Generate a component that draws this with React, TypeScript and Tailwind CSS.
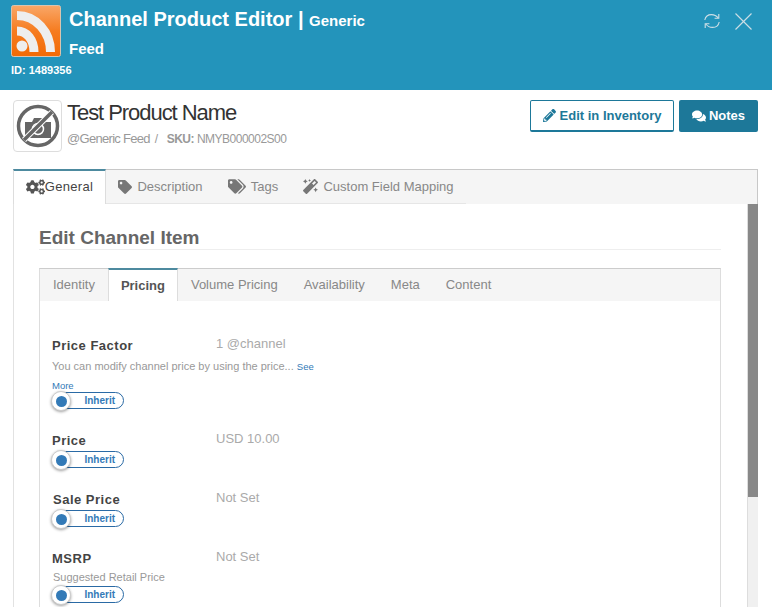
import { FaCogs, FaComments, FaMagic, FaPencilAlt, FaTag, FaTags } from "react-icons/fa";

const RssLogo = () => (
  <svg viewBox="0 0 50 52" className="w-[50px] h-[52px] shrink-0">
    <defs>
      <linearGradient id="rssBg" x1="0" y1="0" x2="0" y2="1">
        <stop offset="0" stopColor="#f9a768" />
        <stop offset="0.5" stopColor="#f67c20" />
        <stop offset="1" stopColor="#f26a05" />
      </linearGradient>
    </defs>
    <rect x="0.5" y="0.5" width="49" height="51" rx="2" fill="url(#rssBg)" stroke="#d8c4b0" />
    <circle cx="11" cy="41" r="5.5" fill="#eeeeee" />
    <path d="M6 26 C16 26 23 35 23 47" fill="none" stroke="#eeeeee" strokeWidth="9" />
    <path d="M6 10.5 C25 10.5 39.5 27 39.5 47" fill="none" stroke="#eeeeee" strokeWidth="9" />
  </svg>
);

const NoImage = () => (
  <div className="w-[49px] h-[52px] shrink-0 border border-[#dddddd] rounded flex items-center justify-center bg-white">
    <svg viewBox="0 0 44 44" className="w-[44px] h-[44px]">
      <path d="M9 18h7l2-4h9l2 4h6v16H9z" fill="#666666" />
      <circle cx="22" cy="25" r="5.5" fill="none" stroke="#ffffff" strokeWidth="1.5" />
      <circle cx="22" cy="22" r="19.5" fill="none" stroke="#666666" strokeWidth="3.5" />
      <path d="M8 36 36 8" stroke="#ffffff" strokeWidth="5.5" />
      <path d="M8 36 36 8" stroke="#666666" strokeWidth="3.5" />
    </svg>
  </div>
);

const RefreshIcon = () => (
  <svg viewBox="0 0 16 16" className="w-[16px] h-[16px]" fill="none" stroke="currentColor" strokeWidth="1.1">
    <path d="M0.8 7 C1.5 3.4 4 1.6 7.4 1.6 C10 1.6 12.4 2.6 14.2 5" />
    <path d="M14.8 1 V5.3 H10.6" />
    <path d="M15.2 9 C14.5 12.6 12 14.4 8.6 14.4 C6 14.4 3.6 13.4 1.8 11" />
    <path d="M1.2 15 V10.7 H5.4" />
  </svg>
);

const CloseIcon = () => (
  <svg viewBox="0 0 17 17" className="w-[17px] h-[17px]" fill="none" stroke="currentColor" strokeWidth="1.1">
    <path d="M0.5 0.5 16.5 16.5" />
    <path d="M16.5 0.5 0.5 16.5" />
  </svg>
);

const Toggle = () => (
  <div className="relative w-[72px] h-[17px] border border-[#2a6aa5] rounded-full bg-white flex items-center justify-end pr-[8px]">
    <span className="text-[10px] font-bold text-[#337ab7] leading-none">Inherit</span>
    <span className="absolute -left-[2px] -top-[2px] w-[20px] h-[20px] rounded-full bg-white border border-[#cccccc] shadow-[0_1px_3px_rgba(0,0,0,0.4)] flex items-center justify-center">
      <span className="w-[11px] h-[11px] rounded-full bg-[#337ab7]" />
    </span>
  </div>
);

const OuterTab = ({ icon, label, width }: { icon: React.ReactNode; label: string; width: string }) => (
  <div className={`${width} h-[34px] flex items-center justify-center gap-[5px] border-b border-[#e6e6e6] text-[13px] text-[#888888]`}>
    {icon}
    {label}
  </div>
);

const Row = ({ label, value, className, labelClass }: { label: string; value: string; className: string; labelClass?: string }) => (
  <div className={`flex h-[18px] items-center ${className}`}>
    <div className={`w-[164px] text-[13px] font-bold tracking-[0.5px] text-[#444444] ${labelClass ?? ""}`}>{label}</div>
    <div className="text-[13px] text-[#aaaaaa] -mt-[4px]">{value}</div>
  </div>
);

export default function App() {
  return (
    <div className="w-[772px] h-[607px] overflow-hidden bg-white font-['Liberation_Sans',Arial,sans-serif]">
      <header className="h-[90px] bg-[#2394bb] pl-[11px] pr-[20px] pt-[5px] flex justify-between text-white">
        <div>
          <div className="flex gap-[8px]">
            <RssLogo />
            <h1 className="w-[320px] mt-[1px] text-[20px] font-bold leading-[27px]">
              Channel Product Editor | <span className="text-[15px]">Generic Feed</span>
            </h1>
          </div>
          <div className="mt-[1px] text-[11px] font-bold leading-[14px]">ID: 1489356</div>
        </div>
        <div className="flex items-start gap-[15px] pt-[8px] text-[#cfdfe6]">
          <RefreshIcon />
          <CloseIcon />
        </div>
      </header>

      <div className="h-[79px] pt-[10px] pl-[13px] pr-[14px] flex justify-between items-start">
        <div className="flex gap-[5px]">
          <NoImage />
          <div>
            <div className="text-[22px] leading-[26px] text-[#333333] tracking-[-1.05px]">Test Product Name</div>
            <div className="mt-[6px] text-[12px] leading-[14px] text-[#999999] tracking-[-0.5px]">
              <span className="text-[13px] tracking-[-0.7px]">@Generic Feed</span>
              <span className="ml-[5px]">/</span>
              <span className="font-bold ml-[9px]">SKU:</span> NMYB000002S00
            </div>
          </div>
        </div>
        <div className="flex gap-[5px]">
          <button className="w-[144px] h-[32px] flex items-center justify-center gap-[4px] bg-white border border-[#1d7899] border-b-[2px] rounded-[2px] text-[13px] font-bold text-[#1d7899]">
            <FaPencilAlt className="w-[13px] h-[13px]" />
            Edit in Inventory
          </button>
          <button className="w-[79px] h-[32px] flex items-center justify-center gap-[3px] bg-[#1d7899] rounded-[2px] text-[13px] font-bold text-white">
            <FaComments className="w-[14px] h-[14px]" />
            Notes
          </button>
        </div>
      </div>

      <div className="mx-[13px] w-[745px] border-t border-r border-[#c8c8c8] h-[438px] flex flex-col">
        <div className="h-[34px] shrink-0 bg-[#f5f5f5] flex">
          <div className="w-[93px] h-[35px] -mt-px pb-[2px] bg-white border-t-[2px] border-t-[#4d8a9f] border-x border-x-[#dddddd] flex items-center justify-center text-[13px] tracking-[0.3px] text-[#444444]">
            <FaCogs className="w-[19px] h-[16px] text-[#555555]" />
            General
          </div>
          <OuterTab width="w-[109px]" icon={<FaTag className="w-[14px] h-[14px] text-[#777777]" />} label="Description" />
          <OuterTab width="w-[76px]" icon={<FaTags className="w-[18px] h-[15px] text-[#777777]" />} label="Tags" />
          <OuterTab width="w-[175px]" icon={<FaMagic className="w-[15px] h-[15px] text-[#777777]" />} label="Custom Field Mapping" />
        </div>
        <div className="flex-1 flex min-h-0 -mr-px">
          <div className="flex-1 min-w-0 border-l-[1.5px] border-[#e2e2e2] pl-[25px] pr-[26px] pt-[22px] overflow-hidden">
            <h2 className="h-[24px] border-b border-[#eeeeee] text-[19px] font-bold leading-[23px] text-[#666666]">Edit Channel Item</h2>
            <div className="mt-[18px] border-t border-x border-[#cccccc] border-x-[#dddddd]">
              <div className="h-[32px] bg-[#f5f5f5] flex text-[13px] text-[#888888]">
                <div className="h-full pl-[13px] pr-[13px] flex items-center">Identity</div>
                <div className="w-[70px] h-[33px] -mt-px bg-white border-t-[2px] border-t-[#4d8a9f] border-x border-x-[#dddddd] flex items-center justify-center font-bold text-[#555555]">Pricing</div>
                <div className="h-full px-[13px] flex items-center">Volume Pricing</div>
                <div className="h-full px-[13px] flex items-center">Availability</div>
                <div className="h-full px-[13px] flex items-center">Meta</div>
                <div className="h-full px-[13px] flex items-center">Content</div>
              </div>
              <div className="pl-[12px] pt-[36px] h-[400px]">
                <Row label="Price Factor" value="1 @channel" className="" />
                <p className="w-[270px] mt-[2px] text-[11px] leading-[18px] text-[#999999]">
                  You can modify channel price by using the price... <span className="text-[9.5px] text-[#337ab7]">See More</span>
                </p>
                <div className="-mt-[3px]"><Toggle /></div>

                <Row label="Price" value="USD 10.00" className="mt-[23px]" />
                <div className="mt-[1px]"><Toggle /></div>

                <Row label="Sale Price" value="Not Set" className="mt-[23px]" labelClass="pl-px" />
                <div className="mt-[1px]"><Toggle /></div>

                <Row label="MSRP" value="Not Set" className="mt-[23px]" />
                <p className="pl-px text-[11px] leading-[18px] text-[#999999]">Suggested Retail Price</p>
                <div><Toggle /></div>
              </div>
            </div>
          </div>
          <div className="w-[11px] shrink-0 border-l border-[#dddddd] bg-[#f0f0f0]">
            <div className="h-[293px] bg-[#888888]" />
          </div>
        </div>
      </div>
    </div>
  );
}
